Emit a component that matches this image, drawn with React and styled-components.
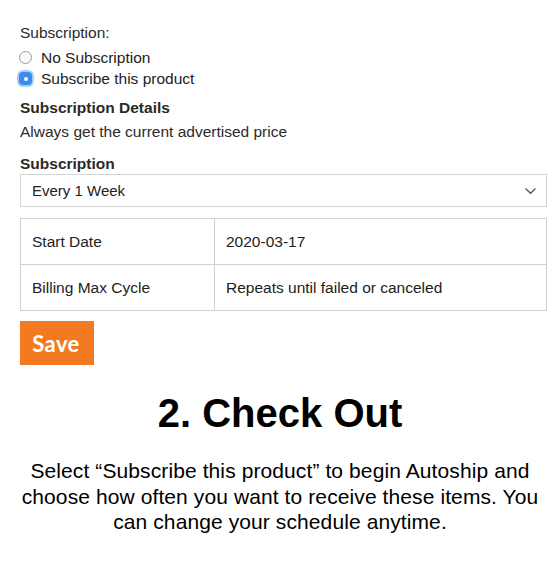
import React from "react";
import styled, { createGlobalStyle } from "styled-components";

const GlobalStyle = createGlobalStyle`
  html, body {
    margin: 0;
    padding: 0;
    background: #fff;
  }
  body {
    font-family: "Liberation Sans", Arial, sans-serif;
    color: #222;
  }
`;

const Page = styled.div`
  width: 560px;
  padding: 22px 13px 0 20px;
  box-sizing: border-box;
`;

const Label = styled.div`
  font-size: 15.5px;
  line-height: 21px;
  color: #2a2a2a;
  font-weight: ${(p) => (p.bold ? 700 : 400)};
  margin-top: ${(p) => p.top || 0}px;
`;

const RadioGroup = styled.div`
  margin-top: 4px;
`;

const RadioRow = styled.label`
  display: flex;
  align-items: center;
  gap: 9px;
  font-size: 15.5px;
  line-height: 21px;
  color: #222;
  margin-left: -1px;
`;

const RadioCircle = styled.span`
  width: 13px;
  height: 13px;
  box-sizing: border-box;
  border-radius: 50%;
  border: 1px solid #9a9a9a;
  background: #fafafa;
`;

const RadioChecked = styled.span`
  position: relative;
  width: 13px;
  height: 13px;
  box-sizing: border-box;
  border-radius: 4px;
  background: #3a8bf0;
  box-shadow: 0 0 0 2px #a9cdf7;

  &::after {
    content: "";
    position: absolute;
    left: 4.5px;
    top: 4.5px;
    width: 4px;
    height: 4px;
    border-radius: 50%;
    background: #fff;
  }
`;

const Select = styled.div`
  display: flex;
  align-items: center;
  justify-content: space-between;
  height: 33px;
  box-sizing: border-box;
  padding: 0 9px 0 11px;
  border: 1px solid #d4d4d4;
  font-size: 15px;
  color: #222;
`;

const Table = styled.div`
  display: grid;
  grid-template-columns: 193px 1fr;
  margin-top: 11px;
  border: 1px solid #d0d0d0;
  border-bottom: none;
`;

const Cell = styled.div`
  height: 45px;
  display: flex;
  align-items: center;
  padding-left: 11px;
  border-bottom: 1px solid #d0d0d0;
  border-left: ${(p) => (p.first ? "none" : "1px solid #d0d0d0")};
  font-size: 15.5px;
  color: #222;
`;

const SaveButton = styled.button`
  display: block;
  margin-top: 10px;
  width: 74px;
  height: 44px;
  border: none;
  background: #f47a22;
  color: #fff;
  font-family: Lato, "Open Sans", sans-serif;
  font-weight: 700;
  font-size: 22px;
  letter-spacing: 0.4px;
  padding: 0 2px 0 0;
  cursor: pointer;
`;

const Heading = styled.h2`
  margin: 25px 0 0 -7px;
  text-align: center;
  font-size: 40px;
  line-height: 46px;
  font-weight: 700;
  color: #000;
`;

const Blurb = styled.p`
  margin: 22px -10px 0 -17px;
  text-align: center;
  font-size: 21px;
  letter-spacing: 0.1px;
  line-height: 25.5px;
  color: #000;
`;

const Chevron = () => (
  <svg width="13" height="8" viewBox="0 0 13 8">
    <path d="M1.5 1.5 L6.5 6.3 L11.5 1.5" fill="none" stroke="#555" strokeWidth="1.3" />
  </svg>
);

export default function App() {
  return (
    <>
      <GlobalStyle />
      <Page>
        <Label>Subscription:</Label>
        <RadioGroup>
          <RadioRow>
            <RadioCircle />
            No Subscription
          </RadioRow>
          <RadioRow>
            <RadioChecked />
            Subscribe this product
          </RadioRow>
        </RadioGroup>
        <Label bold top={8}>Subscription Details</Label>
        <Label top={3}>Always get the current advertised price</Label>
        <Label bold top={11}>Subscription</Label>
        <Select>
          <span>Every 1 Week</span>
          <Chevron />
        </Select>
        <Table>
          <Cell first>Start Date</Cell>
          <Cell>2020-03-17</Cell>
          <Cell first>Billing Max Cycle</Cell>
          <Cell>Repeats until failed or canceled</Cell>
        </Table>
        <SaveButton>Save</SaveButton>
        <Heading>2. Check Out</Heading>
        <Blurb>
          Select “Subscribe this product” to begin Autoship and choose how
          often you want to receive these items. You can change your schedule
          anytime.
        </Blurb>
      </Page>
    </>
  );
}
